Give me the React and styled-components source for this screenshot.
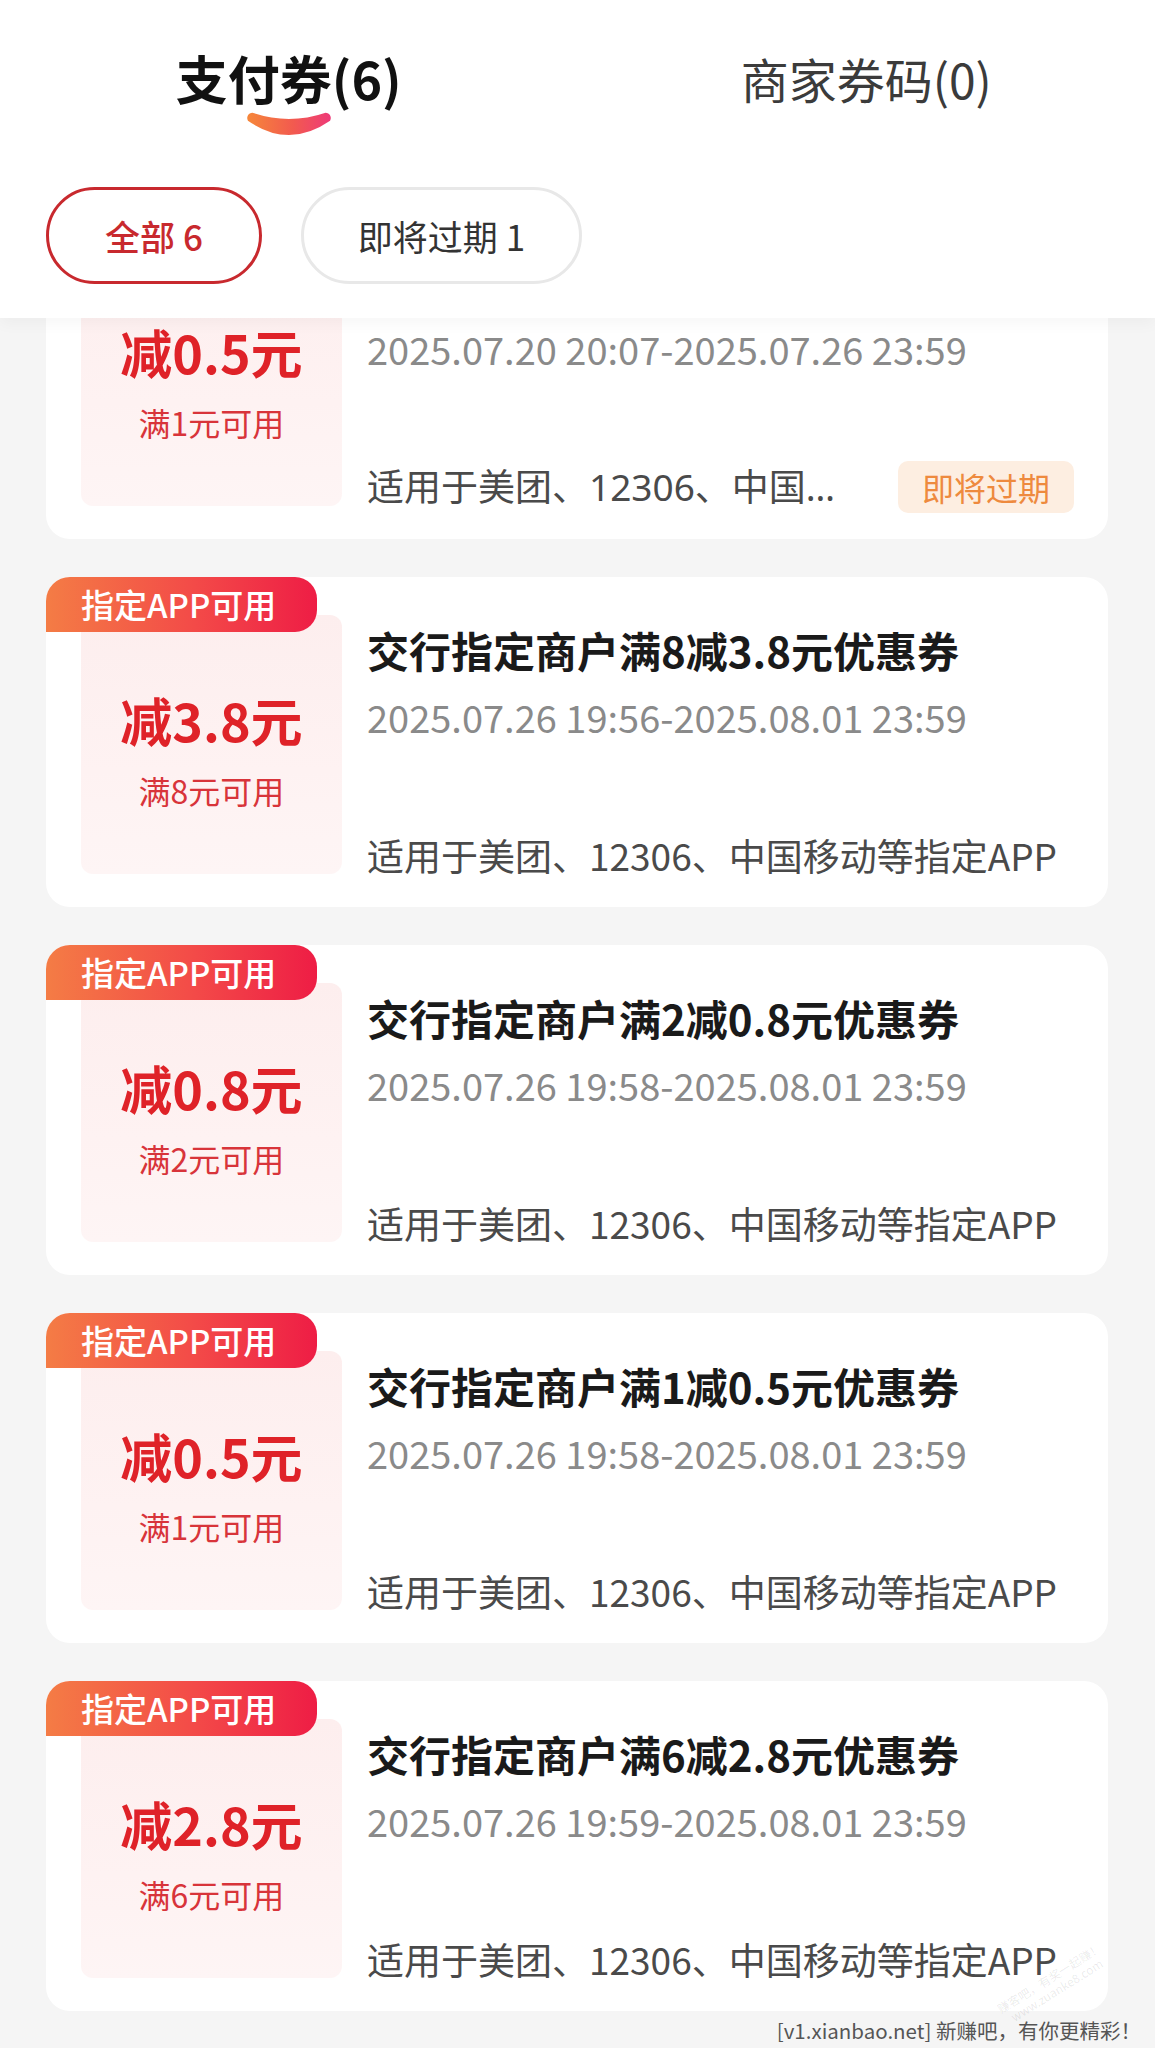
import React from "react";
import styled, { createGlobalStyle } from "styled-components";

const GlobalStyle = createGlobalStyle`
  html, body { margin: 0; padding: 0; background: #f5f5f5; }
  body {
    font-family: "Noto Sans CJK SC", "Noto Sans", sans-serif;
    -webkit-font-smoothing: antialiased;
  }
  * { box-sizing: border-box; }
`;

const Page = styled.div`
  position: relative;
  width: 1155px;
  height: 2048px;
  background: #f5f5f5;
  overflow: hidden;
  display: flex;
  flex-direction: column;
`;

const Header = styled.header`
  position: relative;
  z-index: 2;
  background: #fff;
  padding: 48px 0 34px;
  box-shadow: 0 6px 14px rgba(0, 0, 0, 0.035);
`;

const Tabs = styled.div`
  display: flex;
`;

const Tab = styled.div`
  flex: 1;
  height: 87px;
  display: flex;
  flex-direction: column;
  align-items: center;
`;

const TabLabel = styled.span`
  font-size: ${(p) => (p.$active ? 52 : 48)}px;
  font-weight: ${(p) => (p.$active ? 700 : 400)};
  color: ${(p) => (p.$active ? "#111" : "#3b3b3b")};
  line-height: 60px;
  white-space: nowrap;
`;

const Smile = styled.svg`
  margin-top: 2px;
  display: block;
`;

const Filters = styled.div`
  display: flex;
  gap: 39px;
  margin-top: 52px;
  padding-left: 46px;
`;

const Pill = styled.div`
  height: 97px;
  border-radius: 49px;
  padding: 0 ${(p) => (p.$active ? 56 : 54)}px;
  display: flex;
  align-items: center;
  font-size: 35px;
  font-weight: ${(p) => (p.$active ? 500 : 400)};
  background: #fff;
  border: 3px solid ${(p) => (p.$active ? "#c8292e" : "#e8e8e8")};
  color: ${(p) => (p.$active ? "#c8292e" : "#333")};
  white-space: nowrap;
`;

const List = styled.div`
  margin-top: -109px;
  padding: 0 47px 0 46px;
  display: flex;
  flex-direction: column;
  gap: 38px;
`;

const Card = styled.div`
  position: relative;
  height: 330px;
  background: #fff;
  border-radius: 24px;
  padding: 38px 34px 0 35px;
  display: flex;
  align-items: flex-start;
  gap: 25px;
`;

const Tag = styled.div`
  position: absolute;
  top: 0;
  left: 0;
  height: 55px;
  padding: 0 41px 0 35px;
  border-radius: 24px 22px 22px 0;
  background: linear-gradient(90deg, #f47c45 0%, #f34a48 55%, #ee1d45 100%);
  color: #fff;
  font-size: 33px;
  font-weight: 500;
  line-height: 55px;
  white-space: nowrap;
`;

const AmountPanel = styled.div`
  width: 261px;
  height: 259px;
  flex-shrink: 0;
  border-radius: 12px;
  background: linear-gradient(180deg, #fdeeee 0%, #fef2f2 60%, #fef5f5 100%);
  display: flex;
  flex-direction: column;
  align-items: center;
`;

const Amount = styled.div`
  margin-top: 75px;
  font-size: 52px;
  font-weight: 700;
  line-height: 60px;
  color: #df2228;
  white-space: nowrap;
`;

const Threshold = styled.div`
  margin-top: 20px;
  font-size: 32px;
  line-height: 40px;
  color: #d8343a;
  white-space: nowrap;
`;

const Info = styled.div`
  flex: 1;
  min-width: 0;
  height: 263px;
  display: flex;
  flex-direction: column;
`;

const Title = styled.div`
  margin-top: 10px;
  font-size: 42px;
  font-weight: 600;
  line-height: 50px;
  color: #1a1a1a;
  white-space: nowrap;
`;

const DateText = styled.div`
  margin-top: 18px;
  font-size: 38px;
  line-height: 48px;
  color: #8a8a8a;
  white-space: nowrap;
`;

const BottomRow = styled.div`
  margin-top: auto;
  height: 46px;
  display: flex;
  align-items: center;
  gap: 56px;
`;

const Scope = styled.div`
  flex: 1;
  min-width: 0;
  font-family: ${(p) =>
    p.$truncate
      ? `"Noto Sans", "Noto Sans CJK SC", sans-serif`
      : `"Noto Sans CJK SC", "Noto Sans", sans-serif`};
  font-size: 37px;
  line-height: 46px;
  color: #4a4a4a;
  white-space: nowrap;
  overflow: ${(p) => (p.$truncate ? "hidden" : "visible")};
  text-overflow: ellipsis;
`;

const Badge = styled.div`
  flex-shrink: 0;
  height: 52px;
  padding: 0 24px;
  border-radius: 10px;
  background: #fdeee1;
  color: #ee8a3e;
  font-size: 32px;
  line-height: 52px;
  white-space: nowrap;
`;

const Footer = styled.div`
  flex: 1;
  display: flex;
  justify-content: flex-end;
  align-items: center;
  padding-right: 14px;
  font-size: 20.5px;
  color: #555;
  white-space: nowrap;
`;

const Stamp = styled.div`
  position: absolute;
  right: 42px;
  bottom: 50px;
  transform: rotate(-32deg);
  font-size: 12px;
  line-height: 14px;
  color: rgba(0, 0, 0, 0.09);
  text-align: center;
  white-space: nowrap;
`;

const coupons = [
  {
    tag: false,
    title: "交行指定商户满1减0.5元优惠券",
    amount: "减0.5元",
    threshold: "满1元可用",
    date: "2025.07.20 20:07-2025.07.26 23:59",
    expiring: true,
  },
  {
    tag: true,
    title: "交行指定商户满8减3.8元优惠券",
    amount: "减3.8元",
    threshold: "满8元可用",
    date: "2025.07.26 19:56-2025.08.01 23:59",
  },
  {
    tag: true,
    title: "交行指定商户满2减0.8元优惠券",
    amount: "减0.8元",
    threshold: "满2元可用",
    date: "2025.07.26 19:58-2025.08.01 23:59",
  },
  {
    tag: true,
    title: "交行指定商户满1减0.5元优惠券",
    amount: "减0.5元",
    threshold: "满1元可用",
    date: "2025.07.26 19:58-2025.08.01 23:59",
  },
  {
    tag: true,
    title: "交行指定商户满6减2.8元优惠券",
    amount: "减2.8元",
    threshold: "满6元可用",
    date: "2025.07.26 19:59-2025.08.01 23:59",
  },
];

function SmileMark() {
  return (
    <Smile width="96" height="28" viewBox="0 0 96 28">
      <defs>
        <linearGradient id="smileGrad" x1="0" y1="0" x2="1" y2="0">
          <stop offset="0" stopColor="#f6873a" />
          <stop offset="0.55" stopColor="#f25a4f" />
          <stop offset="1" stopColor="#ee3a78" />
        </linearGradient>
      </defs>
      <path
        d="M7 3 Q48 17 89 3 A6 6 0 0 1 94 12 Q48 44 2 12 A6 6 0 0 1 7 3 Z"
        fill="url(#smileGrad)"
      />
    </Smile>
  );
}

export default function App() {
  return (
    <>
      <GlobalStyle />
      <Page>
        <Header>
          <Tabs>
            <Tab>
              <TabLabel $active>支付券(6)</TabLabel>
              <SmileMark />
            </Tab>
            <Tab>
              <TabLabel>商家券码(0)</TabLabel>
            </Tab>
          </Tabs>
          <Filters>
            <Pill $active>全部 6</Pill>
            <Pill>即将过期 1</Pill>
          </Filters>
        </Header>
        <List>
          {coupons.map((c, i) => (
            <Card key={i}>
              {c.tag && <Tag>指定APP可用</Tag>}
              <AmountPanel>
                <Amount>{c.amount}</Amount>
                <Threshold>{c.threshold}</Threshold>
              </AmountPanel>
              <Info>
                <Title>{c.title}</Title>
                <DateText>{c.date}</DateText>
                <BottomRow>
                  <Scope $truncate={!!c.expiring}>
                    适用于美团、12306、中国移动等指定APP
                  </Scope>
                  {c.expiring && <Badge>即将过期</Badge>}
                </BottomRow>
              </Info>
            </Card>
          ))}
        </List>
        <Footer>[v1.xianbao.net] 新赚吧，有你更精彩！</Footer>
        <Stamp>
          赚客吧，有奖一起赚！
          <br />
          www.zuanke8.com
        </Stamp>
      </Page>
    </>
  );
}
